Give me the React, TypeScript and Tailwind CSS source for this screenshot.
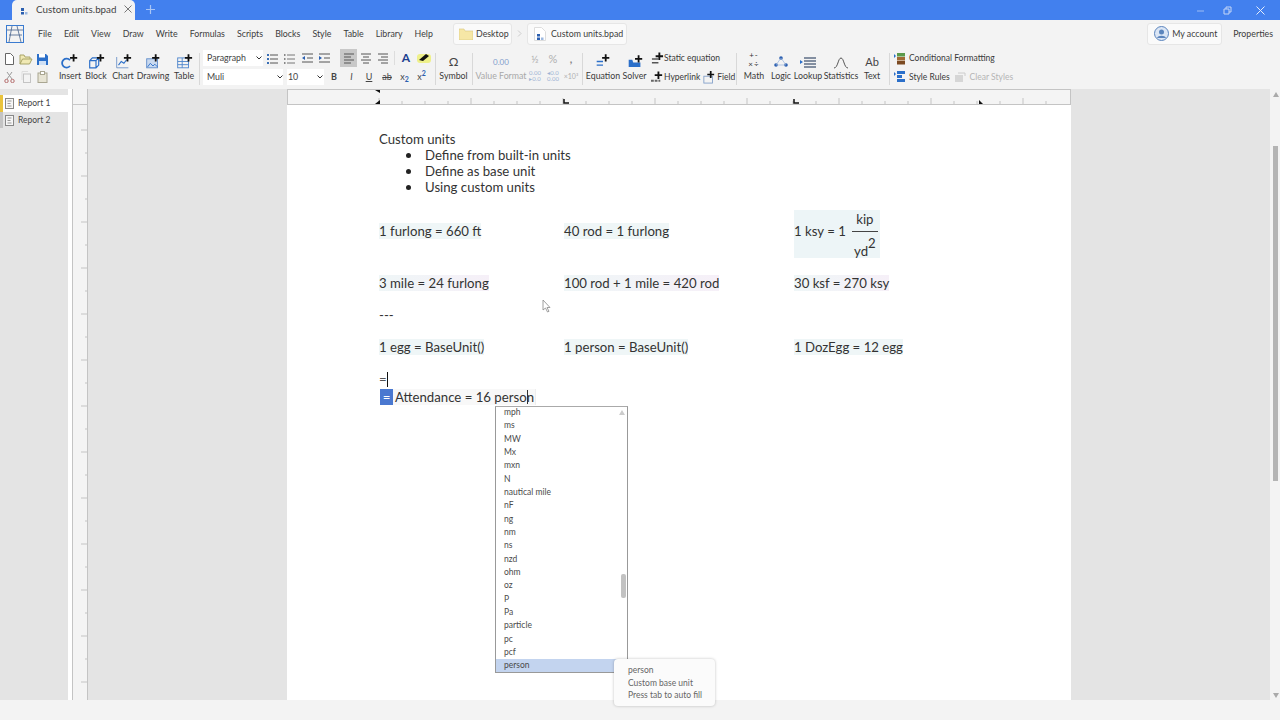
import React from "react";

const FONT = "font-['Lato','Noto_Sans',sans-serif]";

function Plus({ x, y, s = 4 }: { x: number; y: number; s?: number }) {
  return <path d={`M${x - s} ${y}H${x + s}M${x} ${y - s}V${y + s}`} stroke="#111" strokeWidth="2" fill="none" />;
}

const IconBox = ({ children }: { children: React.ReactNode }) => (
  <svg width={18} height={15} viewBox="0 0 20 16" fill="none" className="block">{children}</svg>
);

const InsertI = () => (
  <IconBox>
    <path d="M10 6.500A5 5 0 1 0 10 13" stroke="#2b6fc9" strokeWidth="2" />
    <Plus x={14} y={4} />
  </IconBox>
);
const BlockI = () => (
  <IconBox>
    <path d="M3 7l3-3h7v8l-3 3H3zM3 7h7v8M10 7l3-3" stroke="#2b6fc9" strokeWidth="1.300" />
    <Plus x={15} y={4} />
  </IconBox>
);
const ChartI = () => (
  <IconBox>
    <path d="M3 3v12h13" stroke="#6f94c8" strokeWidth="1" />
    <path d="M5 12l3-4 3 2 3-4" stroke="#2b6fc9" strokeWidth="1.200" />
    <Plus x={15} y={4} />
  </IconBox>
);
const DrawingI = () => (
  <IconBox>
    <rect x="3" y="5" width="12" height="10" fill="#c9d9ef" stroke="#5d8bc9" />
    <path d="M4 14l3-4 3 3 2-2 3 3" stroke="#2b6fc9" />
    <Plus x={13} y={4} />
  </IconBox>
);
const TableI = () => (
  <IconBox>
    <rect x="3" y="4" width="12" height="11" stroke="#4c84cc" />
    <path d="M3 8h12M3 11.500h12M8 4v11" stroke="#4c84cc" />
    <Plus x={15} y={4} />
  </IconBox>
);

function Big({ cls, icon, label, muted }: { cls: string; icon: React.ReactNode; label: string; muted?: boolean }) {
  return (
    <div className={`flex flex-col items-center shrink-0 pt-[1px] ${cls}`}>
      <div className="h-[18px] flex items-end justify-center">{icon}</div>
      <span className={`text-[8.8px] leading-[14px] whitespace-nowrap ${muted ? "text-[#a8a8a8]" : "text-[#3a3a3a]"}`}>{label}</span>
    </div>
  );
}

const Sep = ({ cls = "mx-[2px]" }: { cls?: string }) => <div className={`w-px h-[32px] bg-[#d8d8d8] shrink-0 self-center ${cls}`} />;

function Select({ cls, label }: { cls: string; label: string }) {
  return (
    <div className={`h-[16px] bg-white flex items-center justify-between text-[8.8px] text-[#444] shrink-0 ${cls}`}>
      <span>{label}</span>
      <svg width="6" height="4" viewBox="0 0 6 4"><path d="M0.500 .500L3 3l2.500-2.500" stroke="#333" fill="none" /></svg>
    </div>
  );
}

const Lines = ({ kind }: { kind: string }) => {
  const rows = [2, 6, 10];
  return (
    <svg width="12" height="12" viewBox="0 0 12 12" fill="none" className="block">
      {kind === "bullet" && rows.map((y) => <g key={y}><rect x="1" y={y} width="2" height="2" fill="#3a6fb5" /><path d={`M4 ${y + 1}h8`} stroke="#555" /></g>)}
      {kind === "num" && rows.map((y) => <g key={y}><rect x="1" y={y} width="1.500" height="2" fill="#888" /><path d={`M4 ${y + 1}h8`} stroke="#777" /></g>)}
      {kind === "out" && <><path d="M1 2h11M6 6h6M1 10h11" stroke="#555" /><path d="M4 4L1 6l3 2z" fill="#2b5fb0" /></>}
      {kind === "in" && <><path d="M1 2h11M6 6h6M1 10h11" stroke="#555" /><path d="M1 4l3 2-3 2z" fill="#2b5fb0" /></>}
      {kind === "l" && <path d="M1 2h10M1 5h7M1 8h10M1 11h7" stroke="#555" />}
      {kind === "c" && <path d="M1 2h10M3 5h6M1 8h10M3 11h6" stroke="#555" />}
      {kind === "r" && <path d="M1 2h10M4 5h7M1 8h10M4 11h7" stroke="#555" />}
    </svg>
  );
};

function Cell({ cls, children }: { cls: string; children: React.ReactNode }) {
  return <div className={`flex items-center justify-center shrink-0 h-[18px] ${cls}`}>{children}</div>;
}

function FileIcons() {
  return (
    <div className="w-[51px] shrink-0 grid grid-cols-3 auto-rows-[18px] pl-[1px]">
      <Cell cls="w-[17px]"><svg width="11" height="12" viewBox="0 0 11 12" fill="none"><path d="M1.500 .500h5l3 3v8h-8z" stroke="#666" fill="#fff" /></svg></Cell>
      <Cell cls="w-[17px]"><svg width="14" height="11" viewBox="0 0 14 11" fill="none"><path d="M1 10V1h4l1 2h5v2M1 10l2.500-5H13l-2.500 5z" stroke="#a8a468" fill="#f0e9b4" /></svg></Cell>
      <Cell cls="w-[17px]"><svg width="11" height="11" viewBox="0 0 11 11"><path d="M0 0h9l2 2v9H0z" fill="#2b6fc9" /><rect x="2" y="0" width="6" height="3.500" fill="#fff" /><rect x="2" y="7" width="7" height="4" fill="#cfe0f5" /></svg></Cell>
      <Cell cls="w-[17px]"><svg width="11" height="12" viewBox="0 0 11 12" fill="none"><path d="M3 1l5 7M8 1L3 8" stroke="#9a9a9a" /><circle cx="2.500" cy="10" r="1.700" stroke="#b56d6d" /><circle cx="8.500" cy="10" r="1.700" stroke="#b56d6d" /></svg></Cell>
      <Cell cls="w-[17px]"><svg width="10" height="12" viewBox="0 0 10 12" fill="none"><rect x="2.500" y="3" width="7" height="8.500" stroke="#c4c4c4" /><path d="M1 9V.500h6" stroke="#ddd" /></svg></Cell>
      <Cell cls="w-[17px]"><svg width="11" height="12" viewBox="0 0 11 12" fill="none"><rect x="1" y="2" width="9" height="9.500" fill="#e7e4d4" stroke="#a9a692" /><rect x="3.500" y="0.500" width="4" height="3" fill="#fff" stroke="#a9a692" /></svg></Cell>
    </div>
  );
}

function Ribbon() {
  return (
    <div className="h-[42px] flex items-stretch pt-[3px] pb-[2px] text-[#333] shrink-0">
      <FileIcons />
      <div className="w-[6px] shrink-0" />
      <Big cls="w-[26px]" icon={<InsertI />} label="Insert" />
      <Big cls="w-[26px]" icon={<BlockI />} label="Block" />
      <Big cls="w-[28px]" icon={<ChartI />} label="Chart" />
      <Big cls="w-[32px]" icon={<DrawingI />} label="Drawing" />
      <Big cls="w-[30px]" icon={<TableI />} label="Table" />
      <Sep cls="mr-[3px]" />
      <div className="w-[132px] shrink-0 flex flex-col gap-[2px]">
        <div className="flex items-center h-[16px]">
          <Select cls="w-[60px] pl-[4px] pr-[1px]" label="Paragraph" />
          <div className="flex items-center">
            <Cell cls="w-[17px]"><Lines kind="bullet" /></Cell>
            <Cell cls="w-[18px]"><Lines kind="num" /></Cell>
            <Cell cls="w-[17px]"><Lines kind="out" /></Cell>
            <Cell cls="w-[17px]"><Lines kind="in" /></Cell>
          </div>
        </div>
        <div className="flex items-center h-[17px]">
          <Select cls="w-[80px] pl-[4px]" label="Muli" />
          <Select cls="w-[37px] ml-[4px] pl-[1px] pr-[1px]" label="10" />
        </div>
      </div>
      <div className="shrink-0 flex flex-col gap-[2px] w-[99px] ml-[-1px]">
        <div className="flex items-center h-[16px] pl-[6px]">
          <div className="w-[17px] h-[18px] bg-[#c8c8c8] flex items-center justify-center"><Lines kind="l" /></div>
          <Cell cls="w-[17px]"><Lines kind="c" /></Cell>
          <Cell cls="w-[18px]"><Lines kind="r" /></Cell>
          <div className="w-px h-[14px] bg-[#ddd] mx-[2px]" />
          <Cell cls="w-[18px]"><span className="text-[12px] font-bold text-[#20408f]">A</span></Cell>
          <Cell cls="w-[18px]"><svg width="14" height="11" viewBox="0 0 14 11"><rect x="0" y="1" width="14" height="9" rx="3" fill="#eef08a" /><path d="M2 7l7-6 3 2-6 5z" fill="#111" /></svg></Cell>
        </div>
        <div className="flex items-center h-[17px] text-[9px] text-[#444]">
          <Cell cls="w-[18px] -ml-[9px] font-bold">B</Cell>
          <Cell cls="w-[17px] italic">I</Cell>
          <Cell cls="w-[18px] underline">U</Cell>
          <Cell cls="w-[18px] line-through">ab</Cell>
          <Cell cls="w-[17px]"><span>x<sub className="text-[#2b5fb0] text-[7px] font-bold">2</sub></span></Cell>
          <Cell cls="w-[17px]"><span>x<sup className="text-[#2b5fb0] text-[7px] font-bold">2</sup></span></Cell>
        </div>
      </div>
      <Sep />
      <Big cls="w-[31px]" icon={<span className="text-[12px] leading-[14px] text-[#444]">Ω</span>} label="Symbol" />
      <Sep cls="mx-[3px]" />
      <Big cls="w-[50px]" muted icon={<span className="text-[8px] leading-[14px] text-[#7f9ccc]">0.00</span>} label="Value Format" />
      <div className="w-[54px] shrink-0 grid grid-cols-3 grid-rows-[17px_18px] text-[#b0b0b0]">
        <Cell cls="h-[17px] text-[10px]">½</Cell>
        <Cell cls="h-[17px] text-[11px]">%</Cell>
        <Cell cls="h-[17px] text-[11px] font-bold text-[#888]">,</Cell>
        <Cell cls="h-[18px] text-[6px] leading-[6px] text-center text-[#9fb4d4]"><span>0.00<br />▸0.0</span></Cell>
        <Cell cls="h-[18px] text-[6px] leading-[6px] text-center text-[#9fb4d4]"><span>◂0.0<br />0.00</span></Cell>
        <Cell cls="h-[18px] text-[7px]">×10³</Cell>
      </div>
      <Sep cls="ml-[2px] mr-[2px]" />
      <Big cls="w-[36px]" icon={<svg width="18" height="15" viewBox="0 0 20 16" fill="none"><path d="M3 8h7M3 12h7" stroke="#2b6fc9" strokeWidth="1.500" /><Plus x={13} y={4} /></svg>} label="Equation" />
      <Big cls="w-[27px]" icon={<svg width="18" height="15" viewBox="0 0 20 16" fill="none"><path d="M3 6h4l1 3h8v5H3z" fill="#2b6fc9" /><Plus x={14} y={5} /></svg>} label="Solver" />
      <div className="w-[87px] shrink-0 flex flex-col text-[8.5px] text-[#3a3a3a]">
        <div className="flex items-center h-[17px] whitespace-nowrap">
          <svg width="13" height="14" viewBox="0 0 14 14" fill="none" className="ml-[3px] shrink-0"><path d="M1 7h7M1 11h7" stroke="#555" strokeWidth="1.500" /><Plus x={9} y={4} /></svg>
          <span>Static equation</span>
        </div>
        <div className="flex items-center h-[18px] mt-[1px] whitespace-nowrap">
          <svg width="13" height="15" viewBox="0 0 14 15" fill="none" className="ml-[3px] shrink-0"><path d="M0 11h10" stroke="#666" strokeDasharray="3 1" strokeWidth="2" /><Plus x={8} y={5} /></svg>
          <span>Hyperlink</span>
          <svg width="12" height="15" viewBox="0 0 14 15" fill="none" className="ml-[3px] shrink-0"><rect x="1" y="6" width="10" height="8" stroke="#7e9cc8" /><Plus x={9} y={4} /></svg>
          <span className="ml-[2px]">Field</span>
        </div>
      </div>
      <Sep cls="ml-[1px] mr-[2px]" />
      <Big cls="w-[30px]" icon={<span className="text-[8px] leading-[9px] text-[#333] text-center tracking-[1px]"><span className="block">+-</span><span className="block">×÷</span></span>} label="Math" />
      <Big cls="w-[24px]" icon={<svg width="16" height="14" viewBox="0 0 16 14" fill="#2b5fb0"><circle cx="8" cy="3" r="1.800" /><circle cx="3" cy="10" r="1.800" /><circle cx="13" cy="10" r="1.800" /><path d="M8 3L3 10M8 3l5 7M3 10h10" stroke="#8aa8d6" strokeWidth=".6" /></svg>} label="Logic" />
      <Big cls="w-[30px]" icon={<svg width="16" height="12" viewBox="0 0 16 12"><path d="M0 3l3 2-3 2z" fill="#2b6fc9" /><path d="M4 1h12M4 4h12M4 7h12M4 10h12" stroke="#5f6f86" strokeWidth="1.500" /></svg>} label="Lookup" />
      <Big cls="w-[36px]" icon={<svg width="16" height="12" viewBox="0 0 16 12" fill="none"><path d="M1 11C5 11 5 1 8 1s3 10 7 10" stroke="#555" /></svg>} label="Statistics" />
      <Big cls="w-[26px]" icon={<span className="text-[11px] leading-[14px] text-[#444]">Ab</span>} label="Text" />
      <Sep cls="ml-[4px] mr-[4px]" />
      <div className="flex flex-col shrink-0 text-[8.5px] text-[#3a3a3a]">
        <div className="flex items-center h-[17px] gap-[2px]">
          <svg width="13" height="12" viewBox="0 0 13 12"><path d="M0 1l2 2-2 2z" fill="#2b6fc9" /><rect x="3" y="0" width="8" height="3.500" fill="#5b9a4b" /><rect x="3" y="4" width="8" height="3.500" fill="#a06a34" /><rect x="3" y="8" width="8" height="3.500" fill="#7b4a22" /></svg>
          <span>Conditional Formatting</span>
        </div>
        <div className="flex items-center h-[18px] mt-[1px] gap-[2px]">
          <svg width="13" height="12" viewBox="0 0 13 12"><path d="M0 1l2 2-2 2z" fill="#2b6fc9" /><rect x="3" y="0" width="8" height="3" fill="#2b6fc9" /><rect x="3" y="4" width="5" height="3" fill="#2b6fc9" /><rect x="3" y="8" width="8" height="3" fill="#2b6fc9" /></svg>
          <span>Style Rules</span>
          <svg width="12" height="11" viewBox="0 0 12 11" className="ml-[2px]"><rect x="1" y="3" width="8" height="7" fill="#d6d6d6" /><path d="M4 1h7v3" stroke="#ccc" fill="none" /></svg>
          <span className="text-[#b5b5b5] ml-[2px]">Clear Styles</span>
        </div>
      </div>
    </div>
  );
}

function TopBars() {
  const menus = ["File", "Edit", "View", "Draw", "Write", "Formulas", "Scripts", "Blocks", "Style", "Table", "Library", "Help"];
  return (
    <>
      <div className="h-[20px] bg-[#4280ee] flex items-end shrink-0 relative">
        <div className="w-[123px] h-[20px] ml-[12px] bg-[#f3f3f3] rounded-t-[5px] flex items-center pl-[7px] pb-[2px] text-[#444]">
          <svg width="10" height="11" viewBox="0 0 10 11" className="shrink-0"><rect x="2" y="4" width="3" height="3" fill="#2b5fb0" /><rect x="2" y="8" width="3" height="2.500" fill="#2b5fb0" /><rect x="6" y="8" width="2.500" height="2.500" fill="#9cb8e0" /></svg>
          <span className="ml-[7px] text-[9.8px] whitespace-nowrap">Custom units.bpad</span>
          <svg width="8" height="8" viewBox="0 0 8 8" className="ml-[8px] shrink-0"><path d="M.500.500l7 7M7.500.500l-7 7" stroke="#777" /></svg>
        </div>
        <svg width="9" height="9" viewBox="0 0 9 9" className="ml-[11px] mb-[6px]"><path d="M4.500 0v9M0 4.500h9" stroke="#a9c5f5" strokeWidth="1.200" /></svg>
        <div className="ml-auto h-[20px] flex items-center">
          <svg width="9" height="9" viewBox="0 0 9 9" className="mr-[18px]"><path d="M1 5h7" stroke="#9dbcf3" /></svg>
          <svg width="9" height="9" viewBox="0 0 9 9" className="mr-[24px]"><path d="M1 3h5v5H1zM3 3V1h5v5H6" stroke="#c4d6f6" fill="none" /></svg>
          <svg width="9" height="9" viewBox="0 0 9 9" className="mr-[15px]"><path d="M.500.500l8 8M8.500.500l-8 8" stroke="#e4ecfb" /></svg>
        </div>
      </div>
      <div className="h-[27px] flex items-center shrink-0 text-[#3c3c3c] text-[8.8px]">
        <svg width="18" height="18" viewBox="0 0 18 18" fill="none" className="ml-[6px] shrink-0">
          <rect x=".5" y=".5" width="17" height="17" stroke="#3a7bd0" />
          <path d="M1 5h16M6 1L3 17M11 1l4 16M3 10h13" stroke="#44618c" strokeWidth=".8" />
        </svg>
        <div className="flex items-center justify-between ml-[14px] w-[395px] whitespace-nowrap">
          {menus.map((m) => <span key={m}>{m}</span>)}
        </div>
        <div className="ml-[20px] w-[59px] h-[22px] bg-[#fafafa] border border-[#e6e6e6] rounded-[3px] flex items-center pl-[5px] gap-[3px]">
          <svg width="14" height="12" viewBox="0 0 14 12"><path d="M0 1h5l1 2h8v9H0z" fill="#f6e7a6" stroke="#d8c77e" strokeWidth=".6" /></svg>
          <span>Desktop</span>
        </div>
        <svg width="5" height="7" viewBox="0 0 5 7" className="mx-[5px]"><path d="M1 .500l3 3-3 3" stroke="#ccc" fill="none" /></svg>
        <div className="w-[100px] h-[22px] bg-[#fafafa] border border-[#e6e6e6] rounded-[3px] flex items-center pl-[6px] gap-[5px]">
          <svg width="12" height="14" viewBox="0 0 12 14" fill="none"><path d="M.500.500h7l4 4v9H.500z" fill="#fff" stroke="#ddd" /><rect x="3" y="7" width="3" height="2.500" fill="#2b5fb0" /><rect x="3" y="10.500" width="3" height="2.500" fill="#2b5fb0" /><rect x="7" y="10.500" width="2.500" height="2.500" fill="#9cb8e0" /></svg>
          <span className="whitespace-nowrap">Custom units.bpad</span>
        </div>
        <div className="ml-auto w-[75px] h-[22px] bg-[#fafafa] border border-[#e6e6e6] rounded-[3px] flex items-center pl-[6px] gap-[3px]">
          <svg width="15" height="15" viewBox="0 0 15 15"><circle cx="7.500" cy="7.500" r="7" fill="#dbe6f5" stroke="#5b85bd" /><circle cx="7.500" cy="6" r="2.500" fill="#5b85bd" /><path d="M3 12c1-3 8-3 9 0" fill="#5b85bd" /></svg>
          <span className="whitespace-nowrap">My account</span>
        </div>
        <span className="ml-[11px] mr-[7px]">Properties</span>
      </div>
    </>
  );
}

function Sidebar() {
  const Doc = () => (
    <svg width="9" height="11" viewBox="0 0 9 11" fill="none" className="shrink-0"><rect x=".5" y=".5" width="8" height="10" stroke="#888" fill="#f6f6f6" /><path d="M2.500 3h4M2.500 5.500h3M2.500 8h4" stroke="#999" /></svg>
  );
  return (
    <div className="w-[68px] shrink-0 bg-[#e4e4e4] pt-[6px] text-[8.5px] text-[#444]">
      <div className="h-[17px] bg-white border-l-[3px] border-[#e9c33d] flex items-center pl-[2px] gap-[4px]"><Doc /><span>Report 1</span></div>
      <div className="h-[16px] border-l-[3px] border-[#c4c4c4] flex items-center pl-[2px] gap-[4px]"><Doc /><span>Report 2</span></div>
    </div>
  );
}

function VRuler() {
  const ticks = Array.from({ length: 25 }, (_, i) => i);
  return (
    <div className="w-[16px] shrink-0 bg-[#f4f4f4] border-x border-[#c4c4c4] flex flex-col">
      <div className="h-[16px] border-b border-[#c8c8c8] shrink-0" />
      <svg width="14" height="595" viewBox="0 0 14 595" fill="none" className="block">
        {ticks.map((i) => (
          <path key={i} d={`M${i % 2 === 0 ? 8 : 12} ${25 + i * 23}H14`} stroke="#c4c4c4" />
        ))}
      </svg>
    </div>
  );
}

function HRuler() {
  const ticks = Array.from({ length: 30 }, (_, i) => i);
  return (
    <div className="h-[16px] bg-[#f4f4f4] border border-[#c4c4c4] shrink-0">
      <svg width="782" height="14" viewBox="0 0 782 14" fill="none" className="block">
        {ticks.map((i) => (
          <path key={i} d={`M${91 + i * 23} ${i % 4 === 0 ? 8 : 11}V14`} stroke="#c4c4c4" />
        ))}
        <path d="M87 0h5v3zM87 14h5v-4z" fill="#111" />
        <path d="M276 9v4h5" stroke="#111" strokeWidth="1.500" />
        <path d="M506 9v4h5" stroke="#111" strokeWidth="1.500" />
        <path d="M691 10v4h4z" fill="#111" />
      </svg>
    </div>
  );
}

const eqA = "bg-[#eff6f7]";
const eqB = "bg-[linear-gradient(90deg,#eff6f7,#f6f0f8)]";

function Eq({ children, cls = eqA }: { children: React.ReactNode; cls?: string }) {
  return <span className={`inline-block h-[16px] leading-[16px] whitespace-nowrap ${cls}`}>{children}</span>;
}

function Row({ a, b, c, cls }: { a: React.ReactNode; b: React.ReactNode; c: React.ReactNode; cls: string }) {
  return (
    <div className={`grid grid-cols-[185px_230px_1fr] ${cls}`}>
      <div>{a}</div>
      <div>{b}</div>
      <div>{c}</div>
    </div>
  );
}

function Units() {
  const items = ["mph", "ms", "MW", "Mx", "mxn", "N", "nautical mile", "nF", "ng", "nm", "ns", "nzd", "ohm", "oz", "P", "Pa", "particle", "pc", "pcf", "person"];
  return (
    <div className="absolute left-[208px] top-[317px] w-[133px] h-[267px] bg-white border border-[#999] border-t-[#aaa] overflow-hidden text-[8.5px] text-[#4a4a4a]">
      <div className="flex flex-col -mt-[1px]">
        {items.map((t) => (
          <div key={t} className={`h-[13.33px] leading-[13.33px] pl-[8px] shrink-0 ${t === "person" ? "bg-[#c3d4ef]" : ""}`}>{t}</div>
        ))}
      </div>
      <svg width="6" height="5" viewBox="0 0 6 5" className="absolute right-[2px] top-[3px]"><path d="M3 0l3 5H0z" fill="#ccc" /></svg>
      <div className="absolute right-[1px] top-[167px] w-[5px] h-[24px] bg-[#c2c2c2] rounded-[2px]" />
    </div>
  );
}

function Page() {
  return (
    <div className="w-[784px] shrink-0 bg-white flex flex-col relative text-[13.2px] text-[#333]">
      <HRuler />
      <div className="pl-[92px] pt-[26px] leading-[16px]">
        <div className="h-[16px]">Custom units</div>
        {["Define from built-in units", "Define as base unit", "Using custom units"].map((t) => (
          <div key={t} className="h-[16px] flex items-center pl-[27px]">
            <span className="w-[5px] h-[5px] rounded-full bg-[#222] mr-[14px]" />
            <span>{t}</span>
          </div>
        ))}
        <Row
          cls="mt-[15px] h-[48px]"
          a={<div className="pt-[13px]"><Eq>1 furlong = 660 ft</Eq></div>}
          b={<div className="pt-[13px]"><Eq>40 rod = 1 furlong</Eq></div>}
          c={
            <div className="inline-flex items-start h-[48px] w-[86px] bg-[#edf5f7] whitespace-nowrap">
              <span className="mt-[13px] h-[16px] leading-[16px]">1 ksy = 1</span>
              <div className="ml-[6px] flex flex-col items-center w-[26px]">
                <span className="h-[18px] leading-[18px]">kip</span>
                <div className="w-full h-px bg-[#444] mt-[3px]" />
                <span className="h-[16px] leading-[16px] mt-[11px]">yd<sup className="text-[13.2px] -top-[8px] relative align-baseline">2</sup></span>
              </div>
            </div>
          }
        />
        <Row
          cls="mt-[17px] h-[16px]"
          a={<Eq cls={eqB}>3 mile = 24 furlong</Eq>}
          b={<Eq cls={eqB}>100 rod + 1 mile = 420 rod</Eq>}
          c={<Eq cls={eqB}>30 ksf = 270 ksy</Eq>}
        />
        <div className="mt-[16px] h-[16px]">---</div>
        <Row
          cls="mt-[16px] h-[16px]"
          a={<Eq>1 egg = BaseUnit()</Eq>}
          b={<Eq>1 person = BaseUnit()</Eq>}
          c={<Eq>1 DozEgg = 12 egg</Eq>}
        />
        <div className="mt-[16px] h-[16px] flex items-center">
          <span className="text-[#555]">=</span>
          <span className="w-px h-[15px] bg-[#111]" />
        </div>
        <div className="mt-[2px] h-[16px] flex items-center ml-[1px]">
          <span className="w-[13px] h-[16px] bg-[#4a78d0] text-white text-center leading-[16px]">=</span>
          <span className="relative h-[16px] w-[143px] pl-[2px] bg-[#f8f8f8] border-r border-[#eee] whitespace-nowrap">
            Attendance = 16 person
            <span className="absolute left-[134px] top-[1px] w-px h-[14px] bg-[#333]" />
          </span>
        </div>
      </div>
      <Units />
      <div className="absolute left-[327px] top-[570px] w-[101px] h-[47px] bg-[#fbfbfb] rounded-[4px] shadow-[0_0_3px_rgba(0,0,0,0.25)] pl-[14px] pt-[5px] text-[8.5px] leading-[12.500px] text-[#666] whitespace-nowrap">
        <div>person</div>
        <div>Custom base unit</div>
        <div>Press tab to auto fill</div>
      </div>
      <svg width="10" height="14" viewBox="0 0 10 14" className="absolute left-[255px] top-[210px]"><path d="M1 1v10l2.500-2 2 4 1.500-.7-2-3.800H8z" fill="#fff" stroke="#888" strokeWidth=".8" /></svg>
    </div>
  );
}

export default function App() {
  return (
    <div className={`w-[1280px] h-[720px] overflow-hidden flex flex-col bg-[#f3f3f3] ${FONT}`}>
      <TopBars />
      <Ribbon />
      <div className="h-[611px] flex shrink-0">
        <Sidebar />
        <div className="w-[4px] shrink-0 bg-white" />
        <VRuler />
        <div className="w-[199px] shrink-0 bg-[#e4e4e4]" />
        <Page />
        <div className="w-[199px] shrink-0 bg-[#e4e4e4]" />
        <div className="w-[10px] shrink-0 bg-[#f3f3f3] flex flex-col items-center pt-[3px] pl-[1px] relative">
          <svg width="6" height="5" viewBox="0 0 6 5"><path d="M3 0l3 5H0z" fill="#aaa" /></svg>
          <div className="w-[5px] h-[335px] bg-[#b4b4b4] mt-[49px]" />
          <svg width="6" height="5" viewBox="0 0 6 5" className="mt-[212px]"><path d="M3 5l3-5H0z" fill="#aaa" /></svg>
        </div>
      </div>
      <div className="h-[20px] shrink-0" />
    </div>
  );
}
